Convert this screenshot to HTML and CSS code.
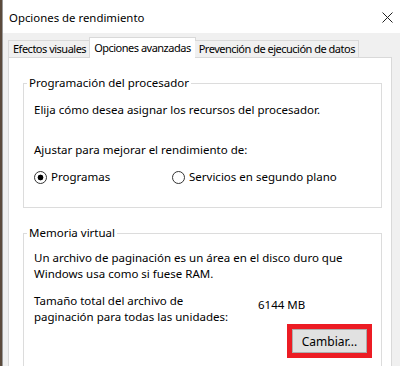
FILE: index.html
```html
<!DOCTYPE html>
<html lang="es">
<head>
  <meta charset="UTF-8" />
  <title>Opciones de rendimiento</title>
  <link rel="stylesheet" href="styles.css">
</head>
<body>
  <div class="window">
    <div class="titlebar">
      <span class="title">Opciones de rendimiento</span>
      <svg class="close" width="11" height="11" viewBox="0 0 11 11">
        <path d="M0.5 0.5 L10.5 10.5 M10.5 0.5 L0.5 10.5" stroke="#222" stroke-width="1" fill="none" />
      </svg>
    </div>

    <div class="body">
      <div class="tabs">
        <div class="tab">Efectos visuales</div>
        <div class="tab active">Opciones avanzadas</div>
        <div class="tab">Prevención de ejecución de datos</div>
      </div>

      <div class="panel">
        <fieldset class="group">
          <legend>Programación del procesador</legend>
          <p class="line">Elija cómo desea asignar los recursos del procesador.</p>
          <p class="line adjust">Ajustar para mejorar el rendimiento de:</p>
          <div class="radios">
            <label class="radio"><span class="dot checked"></span>Programas</label>
            <label class="radio"><span class="dot"></span>Servicios en segundo plano</label>
          </div>
        </fieldset>

        <fieldset class="group memory">
          <legend>Memoria virtual</legend>
          <p class="line">Un archivo de paginación es un área en el disco duro que<br>Windows usa como si fuese RAM.</p>
          <div class="size">
            <p class="line">Tamaño total del archivo de<br>paginación para todas las unidades:</p>
            <div class="size-right">
              <span class="value">6144 MB</span>
              <button class="btn">Cambiar...</button>
            </div>
          </div>
        </fieldset>
      </div>
    </div>
  </div>
</body>
</html>
```

FILE: styles.css
```css
body {
  margin: 0;
  background: #5b4a3c;
  font-family: "Noto Sans", "Open Sans", sans-serif;
  font-size: 11.5px;
  color: #000;
}
.window {
  margin-left: 2px;
  height: 366px;
  background: #f0f0f0;
  border-left: 1px solid #9a9a9a;
  overflow: hidden;
}
.titlebar {
  height: 33px;
  background: #fff;
  display: flex;
  align-items: center;
  justify-content: space-between;
  padding: 0 7px 0 6px;
  font-size: 11.4px;
}
.title {
  margin-top: 1px;
}
.close {
  margin-top: 2px;
}
.body {
  padding: 4px 8px 0 5px;
}
.tabs {
  display: flex;
  align-items: flex-end;
  height: 20px;
  position: relative;
  z-index: 1;
  font-size: 11px;
  letter-spacing: -0.5px;
}
.tab {
  height: 16px;
  line-height: 16px;
  padding: 0 3px 0 4px;
  background: #f0f0f0;
  border: 1px solid #d9d9d9;
  border-bottom: none;
  white-space: nowrap;
}
.tab + .tab {
  border-left: none;
}
.tab.active {
  height: 20px;
  line-height: 19px;
  background: #fff;
  margin: 0 -1px -1px -1px;
  padding: 0 4px;
  border-left: 1px solid #d9d9d9;
}
.tab.active + .tab {
  border-left: none;
}
.panel {
  background: #fff;
  border: 1px solid #d9d9d9;
  padding: 17px 9px 0 14px;
  height: 320px;
}
.group {
  margin: 0;
  border: 1px solid #dcdcdc;
  padding: 11px 14px 22px 10px;
}
.group legend {
  margin-left: -7px;
  padding: 0 2px;
  line-height: 16px;
}
.line {
  margin: 0;
  line-height: 16px;
  white-space: nowrap;
}
.adjust {
  margin-top: 24px;
}
.radios {
  display: grid;
  grid-template-columns: 138px 1fr;
  margin-top: 11px;
}
.radio {
  display: flex;
  align-items: center;
  line-height: 16px;
}
.dot {
  width: 11px;
  height: 11px;
  border: 1px solid #333;
  border-radius: 50%;
  margin-right: 4px;
  background: #fff;
}
.dot.checked {
  background: radial-gradient(circle, #000 2.6px, #fff 3.2px);
}
.memory {
  margin-top: 17px;
  padding-top: 9px;
}
.size {
  display: grid;
  grid-template-columns: 224px 1fr;
  margin-top: 11px;
}
.size-right {
  display: flex;
  flex-direction: column;
  align-items: flex-start;
}
.value {
  margin-top: 4px;
  line-height: 16px;
}
.btn {
  align-self: flex-end;
  margin-top: 16px;
  width: 75px;
  height: 24px;
  background: #e1e1e1;
  border: 1px solid #adadad;
  outline: 5px solid #ec1c24;
  font-family: inherit;
  font-size: 12px;
  padding: 0;
  color: #000;
}
```
